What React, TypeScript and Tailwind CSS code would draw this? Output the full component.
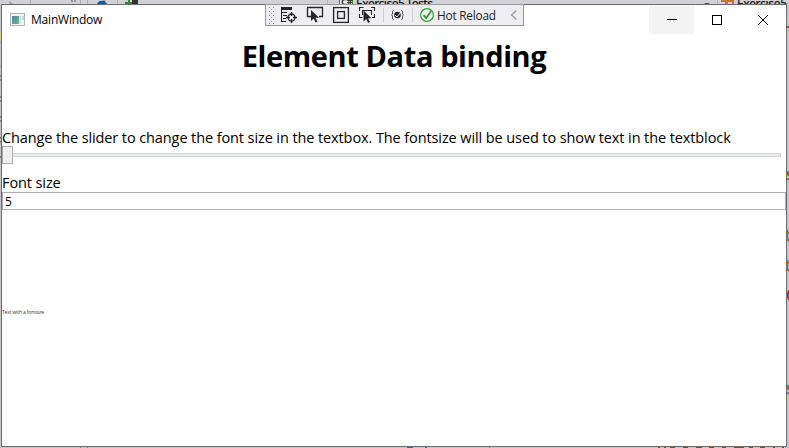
import React from "react";

function Backdrop() {
  return (
    <div className="absolute inset-0 overflow-hidden bg-[#c6c6c8]" aria-hidden="true">
      <svg width="789" height="448" className="block" fontFamily="'Noto Sans', sans-serif">
        <rect width="789" height="5" fill="#d0d0d5" />
        <path d="M9 1l5 3H9z" fill="#aaa" />
        <path d="M30.500 0v4M80.500 0v4M87.500 0v4M117.500 0v4M327.500 0v4M717.500 0v4" stroke="#b0b0c3" />
        <path d="M72 0v2M75 0v2" stroke="#555" />
        <path d="M97 4q2-4 6-3l1-1 3 4z" fill="#175b96" />
        <path d="M125 3h8M129 0v4" stroke="#348236" strokeWidth="2" />
        <rect x="132" width="6" height="4" fill="#333" />
        <rect x="339.500" y="-6" width="13" height="11" fill="#eee" stroke="#388a38" />
        <text x="341" y="5" fontSize="9" fontWeight="bold" fill="#333">C#</text>
        <text x="356" y="8" fontSize="12" fill="#111" stroke="#111" strokeWidth=".2" textLength="77">Exercise5.Tests</text>
        <path d="M704 3h6l-3 2z" fill="#555" />
        <path d="M721 1h5v3M727 4V1h6v3" fill="none" stroke="#c27b18" strokeWidth="2" />
        <text x="737" y="8" fontSize="12" fill="#111" stroke="#111" strokeWidth=".2" textLength="50">Exercise5</text>
        <path d="M0 31h1v10H0z" fill="#d5cf9b" />
        <path d="M0 42h1M0 66h1" stroke="#9a9ab0" />
        <path d="M0 76h1M0 80h1M0 97h1M0 101h1M0 117h1M0 121h1M0 138h1M0 142h1M0 157h1" stroke="#444" />
        <path d="M787 15v20M788 20v15" stroke="#cfc9aa" />
        <path d="M787 27h2" stroke="#7c5b22" strokeWidth="2" />
        <g fontSize="16" fill="#805820" stroke="#805820" strokeWidth=".4">
          <text x="786" y="180">s</text>
          <text x="785" y="241" fill="#a56b1c">t</text>
          <text x="785" y="271" fill="#a56b1c">t</text>
          <text x="786" y="301" fill="#aa2537" stroke="#aa2537">C</text>
          <text x="786" y="394">s</text>
        </g>
        <path d="M80.500 446v2M87.500 446v2M489.500 446v2" stroke="#88888c" />
        <path d="M407 447.500h6M425 447.500h2" stroke="#28788b" strokeWidth="2" />
        <path d="M658 447.500h2M664 447.500h2M670 447.500h5M683 447.500h5M696 447.500h6M709 447.500h5M722 447.500h4M734 447.500h10M749 447.500h4M760 447.500h5M773 447.500h2M782 447.500h2" stroke="#70522b" strokeWidth="2" />
      </svg>
    </div>
  );
}

function AppIcon() {
  return (
    <svg width="16" height="14" viewBox="0 0 16 14" className="block shrink-0">
      <defs>
        <linearGradient id="pane" x1="0" y1="0" x2="1" y2="1">
          <stop stopColor="#5681a6" />
          <stop offset="1" stopColor="#65b981" />
        </linearGradient>
      </defs>
      <rect x=".5" y=".5" width="14" height="12" fill="#f4f6f6" stroke="#adb3b5" />
      <rect x="2" y="3" width="7" height="8" fill="url(#pane)" />
      <path d="M10 3h1v8h-1zM12 3h2v4h-2z" fill="#c2d8d4" />
    </svg>
  );
}

const cursor = "M0 0v11l2.700-2.500 2 4 1.800-.9-2-3.800H8z";

function DebugToolbar() {
  return (
    <div className="absolute left-[265px] top-[4px] flex h-[22px] w-[259px] items-center border border-[#999] bg-[#eeeef2]">
      <svg width="257" height="20" viewBox="266 5 257 20" className="block" fill="none" stroke="#252525" strokeWidth="1.300">
        <g fill="#999" stroke="none">
          {[7, 11, 15, 19].map((y) => (
            <path key={y} d={`M269 ${y}h1v1h-1zM273 ${y}h1v1h-1zM271 ${y + 2}h1v1h-1z`} />
          ))}
          <path d="M269 23h1v1h-1zM273 23h1v1h-1z" />
        </g>
        <path d="M281 7h11v3h-11z" fill="#252525" stroke="none" />
        <path d="M281.500 10v12M281 12.500h6M283 15.500h4M283 18.500h3M281 21.500h5" strokeWidth="1" />
        <circle cx="291.500" cy="17.500" r="3.500" />
        <path d="M291.500 12v4M291.500 19v4M286 17.500h4M293 17.500h4" />
        <path d="M311 16.500h-3.500v-9h15v9H319" />
        <path d={cursor} transform="translate(311 10)" fill="#252525" stroke="none" />
        <rect x="333.600" y="7.600" width="14.800" height="14.800" />
        <rect x="337.600" y="11.600" width="6.800" height="6.800" />
        <path d="M359.500 11V7.500h4M371 7.500h3.500V11M359.500 14v3.500h3M374.500 14v3.500H372M363 14.500h-.5v-4h9v4H371" strokeWidth="1.100" />
        <path d={cursor} transform="translate(363.500 10.500)" fill="#252525" stroke="none" />
        <path d="M383.500 8v14M412.500 8v14" stroke="#cccedb" strokeWidth="1" />
        <path d="M394 10.500h-.5q-1 0-1 1.500v2l-1 1 1 1v2q0 1.500 1 1.500h.5M401 10.500h.5q1 0 1 1.500v2l1 1-1 1v2q0 1.500-1 1.500h-.5" stroke="#555" strokeWidth="1" />
        <circle cx="397.500" cy="15" r="3.300" fill="#252525" stroke="none" />
        <path d="M395 15l2 2 4-5" stroke="#eeeef2" strokeWidth="1" />
        <circle cx="427" cy="15" r="6.400" fill="#f7fbf7" stroke="#329c35" />
        <path d="M423.500 15l2.700 3 5-7" stroke="#329c35" strokeWidth="1.900" />
        <path d="M516.500 10.500L511.500 15l5 4.500" stroke="#999" />
        <text x="437" y="19.500" fontFamily="'Open Sans', sans-serif" fontSize="11.800" textLength="59" fill="#1e1e1e" stroke="none">Hot Reload</text>
      </svg>
    </div>
  );
}

function TitleBar() {
  return (
    <header className="flex h-[29px] items-start">
      <div className="flex items-center gap-[5px] pl-[8px] pt-[5px]">
        <AppIcon />
        <span className="text-[12px] leading-[20px] tracking-[-0.2px]">MainWindow</span>
      </div>
      <div className="ml-auto flex pr-[1px]">
        <button className="flex h-[29px] w-[45px] items-center justify-center bg-[#f4f4f4]" aria-label="Minimize">
          <svg width="10" height="10"><path d="M0 4.500h10" stroke="#000" /></svg>
        </button>
        <button className="flex h-[29px] w-[46px] items-center justify-center" aria-label="Maximize">
          <svg width="10" height="10"><rect x=".5" y=".5" width="9" height="9" fill="none" stroke="#000" /></svg>
        </button>
        <button className="flex h-[29px] w-[45px] items-center justify-center" aria-label="Close">
          <svg width="10" height="10"><path d="M0 0l10 10M10 0L0 10" stroke="#000" /></svg>
        </button>
      </div>
    </header>
  );
}

export default function App() {
  return (
    <main className="relative h-[448px] w-[789px] overflow-hidden font-['Open_Sans',sans-serif] text-black">
      <Backdrop />
      <section className="absolute left-[1px] top-[4px] flex h-[443px] w-[786px] flex-col border border-[#6c6c6e] bg-white">
        <TitleBar />
        <h1 className="h-[95px] whitespace-nowrap text-center text-[29px] font-bold leading-[44px] tracking-[-0.4px]">Element Data binding</h1>
        <p className="h-[17px] whitespace-nowrap text-[14.5px] leading-[18px] tracking-[-0.1px]">
          Change the slider to change the font size in the textbox. The fontsize will be used to show text in the textblock
        </p>
        <div className="flex h-[18px] items-center">
          <div className="h-[18px] w-[11px] border border-[#acacac] bg-[#f0f0f0]" />
          <div className="h-[4px] w-[768px] border border-l-0 border-[#d6d6d6] bg-[#e7eaea]" />
        </div>
        <label className="mt-[9px] h-[19px] text-[14.5px] leading-[19px] tracking-[-0.1px]">Font size</label>
        <div className="h-[18px] border border-[#abadb3] pl-[2px] text-[12px] leading-[17px]">5</div>
        <p className="mt-[98px] text-[5px] leading-[8px] tracking-[-0.15px] text-[#333]">Text with a fontsize</p>
      </section>
      <DebugToolbar />
    </main>
  );
}
